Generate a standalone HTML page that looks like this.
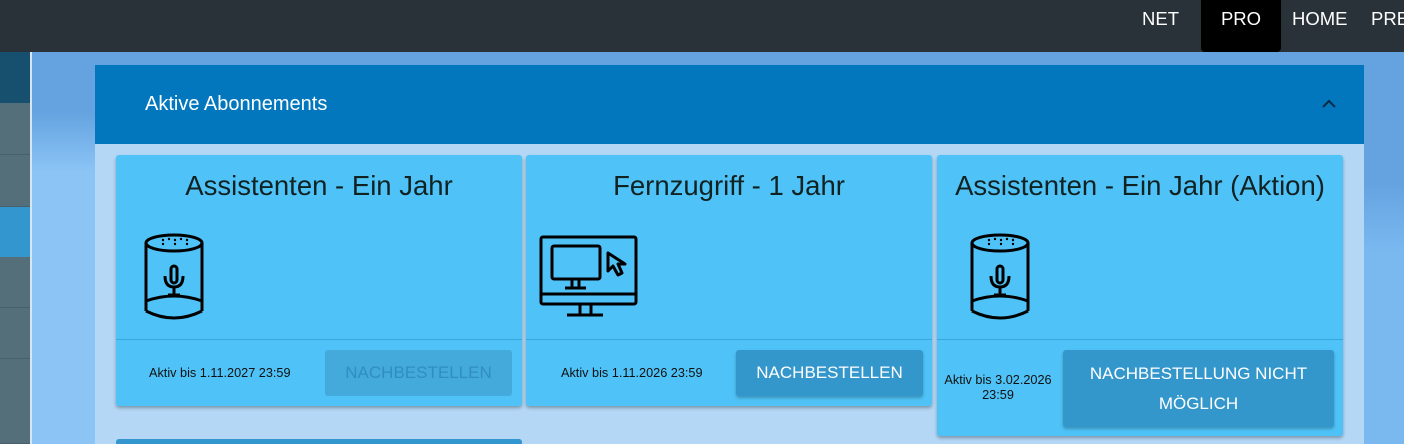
<!DOCTYPE html>
<html style="width:1404px;height:444px;overflow:hidden"><head><meta charset="utf-8"><style>
*{margin:0;padding:0;box-sizing:border-box}
body{width:1404px;height:444px;overflow:hidden;font-family:"Liberation Sans",Roboto,sans-serif;background:#64a3e0;position:relative}
.top{position:absolute;left:0;top:0;width:1404px;height:52px;background:#283238}
.nav{position:absolute;top:0;height:52px;color:#fff;font-size:18.5px;line-height:38px}
.side{position:absolute;left:0;width:30px;background:#546e7a;border-bottom:1px solid #47606b}
.sline{position:absolute;left:30px;top:52px;width:2px;height:392px;background:#d6e6f2}
.panel{position:absolute;left:95px;top:65px;width:1269px;height:379px;background:#b3d7f5}
.ph{height:79px;background:#0277bd;color:#fff;font-size:20px;padding-left:50px;line-height:79px}
.card{position:absolute;top:155px;width:406px;background:#4fc3f7;border-radius:3px;box-shadow:0 2px 3px rgba(0,0,0,.3)}
.card h2{font-weight:400;font-size:27.5px;color:#122;text-align:center;margin-top:15px;line-height:32px;white-space:nowrap}
.ft{position:absolute;top:184px;left:0;right:0;border-top:1px solid #3aa7da}
.dt{position:absolute;font-size:12.7px;color:#111;text-align:center}
.btn{position:absolute;background:#3397cc;color:#fff;font-size:17px;text-align:center;border-radius:3px;box-shadow:0 2px 3px rgba(0,0,0,.25)}
</style></head><body>
<div class="top"></div>
<div class="nav" style="left:1142px">NET</div>
<div class="nav" style="left:1201px;width:80px;background:#000;border-radius:0 0 4px 4px;text-align:center">PRO</div>
<div class="nav" style="left:1292px">HOME</div>
<div class="nav" style="left:1371px">PRE</div>
<div style="position:absolute;left:0;top:52px;width:30px;height:51px;background:#174f6f"></div>
<div class="side" style="top:103px;height:52px"></div>
<div class="side" style="top:155px;height:52px"></div>
<div style="position:absolute;left:0;top:207px;width:30px;height:50px;background:#3396cf"></div>
<div class="side" style="top:257px;height:51px"></div>
<div class="side" style="top:308px;height:51px"></div>
<div class="side" style="top:359px;height:85px"></div>
<div class="sline"></div>
<div style="position:absolute;left:32px;top:52px;width:63px;height:392px;background:linear-gradient(#64a3e0 0,#64a3e0 60px,#8cc4f5 120px)"></div>
<div style="position:absolute;left:1364px;top:52px;width:40px;height:392px;background:linear-gradient(#64a3e0 0,#64a3e0 130px,#7ab8f0 200px)"></div>
<div class="panel"><div class="ph">Aktive Abonnements
<svg style="position:absolute;left:1226px;top:33px" width="16" height="12" viewBox="0 0 16 12"><path d="M2 9L8 3L14 9" stroke="#0d2a44" stroke-width="2" fill="none"/></svg></div></div>

<div class="card" style="left:116px;height:251px">
<h2>Assistenten - Ein Jahr</h2>
<svg style="position:absolute;left:27px;top:78px" width="62" height="90" viewBox="0 0 62 90"><g fill="none" stroke="#000" stroke-width="3"><ellipse cx="31" cy="10" rx="28" ry="8"/><path d="M3 10V78M59 10V78M3 68Q31 58 59 68M3 78Q31 92 59 78"/><rect x="28" y="33" width="6" height="17" rx="3"/><path d="M22 43Q22 54 31 54Q40 54 40 43M31 54V62M25 62H37"/></g><g fill="#000"><circle cx="20" cy="7" r="1.2"/><circle cx="26" cy="6" r="1.2"/><circle cx="32" cy="7" r="1.2"/><circle cx="38" cy="6" r="1.2"/><circle cx="44" cy="7" r="1.2"/><circle cx="20" cy="11" r="1.2"/><circle cx="32" cy="11" r="1.2"/><circle cx="44" cy="11" r="1.2"/></g></svg>
<div class="ft"></div>
<div class="dt" style="left:33px;top:211px">Aktiv bis 1.11.2027 23:59</div>
<div class="btn" style="left:209px;top:195px;width:187px;height:46px;line-height:46px;background:#44a9db;color:#2f8fc0;box-shadow:none">NACHBESTELLEN</div>
</div>

<div class="card" style="left:526px;height:251px">
<h2>Fernzugriff - 1 Jahr</h2>
<svg style="position:absolute;left:13px;top:80px" width="100" height="84" viewBox="0 0 100 84"><g fill="none" stroke="#000" stroke-width="3"><rect x="2" y="2" width="95" height="67" rx="2"/><path d="M2 59H97"/><rect x="13" y="11" width="48" height="33" rx="2"/><path d="M33 44V52M40 44V52M26 53H47"/><path d="M41 69V79M52 69V79M28 80H64"/><path d="M69 18L69 36L74 31L79 40L83 38L79 29L86 29Z" stroke-linejoin="round"/></g></svg>
<div class="ft"></div>
<div class="dt" style="left:35px;top:211px">Aktiv bis 1.11.2026 23:59</div>
<div class="btn" style="left:210px;top:195px;width:187px;height:46px;line-height:46px">NACHBESTELLEN</div>
</div>

<div class="card" style="left:937px;height:281px">
<h2>Assistenten - Ein Jahr (Aktion)</h2>
<svg style="position:absolute;left:32px;top:78px" width="62" height="90" viewBox="0 0 62 90"><g fill="none" stroke="#000" stroke-width="3"><ellipse cx="31" cy="10" rx="28" ry="8"/><path d="M3 10V78M59 10V78M3 68Q31 58 59 68M3 78Q31 92 59 78"/><rect x="28" y="33" width="6" height="17" rx="3"/><path d="M22 43Q22 54 31 54Q40 54 40 43M31 54V62M25 62H37"/></g><g fill="#000"><circle cx="20" cy="7" r="1.2"/><circle cx="26" cy="6" r="1.2"/><circle cx="32" cy="7" r="1.2"/><circle cx="38" cy="6" r="1.2"/><circle cx="44" cy="7" r="1.2"/><circle cx="20" cy="11" r="1.2"/><circle cx="32" cy="11" r="1.2"/><circle cx="44" cy="11" r="1.2"/></g></svg>
<div class="ft"></div>
<div class="dt" style="left:6px;top:218px;width:110px;line-height:15px">Aktiv bis 3.02.2026 23:59</div>
<div class="btn" style="left:126px;top:195px;width:271px;height:77px;line-height:30px;padding-top:9px">NACHBESTELLUNG NICHT<br>MÖGLICH</div>
</div>

<div style="position:absolute;left:116px;top:439px;width:406px;height:5px;background:#3396cf;border-radius:3px 3px 0 0"></div>
</body></html>
